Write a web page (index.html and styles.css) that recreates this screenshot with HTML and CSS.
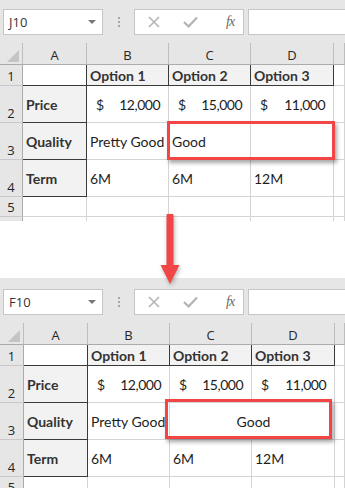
FILE: index.html
```html
<!DOCTYPE html>
<html lang="en">
<head>
  <meta charset="UTF-8" />
  <title>Merge Cells</title>
  <link rel="stylesheet" href="styles.css">
</head>
<body>
<div class="shot">

  <!-- Before -->
  <div class="panel first">
    <div class="fbar">
      <div class="namebox"><span>J10</span><i class="caret"></i></div>
      <div class="grip"><i></i><i></i><i></i></div>
      <div class="fbtns">
        <svg width="12" height="12" viewBox="0 0 12 12"><path d="M1 1L11 11M11 1L1 11" stroke="#b4b4b4" stroke-width="1.6" fill="none"/></svg>
        <svg width="15" height="12" viewBox="0 0 15 12"><path d="M1 6L5.5 10.5L14 1.5" stroke="#b4b4b4" stroke-width="2.2" fill="none"/></svg>
        <span class="fx">fx</span>
      </div>
      <div class="finput"></div>
    </div>
    <div class="sheet">
      <div class="h corner"><i class="tri"></i></div>
      <div class="h">A</div><div class="h">B</div><div class="h">C</div><div class="h">D</div><div class="h"></div>

      <div class="rh">1</div>
      <div class="c dk"></div>
      <div class="c dk hd">Option 1</div>
      <div class="c dk hd">Option 2</div>
      <div class="c dk hd">Option 3</div>
      <div class="c"></div>

      <div class="rh">2</div>
      <div class="c dk hd">Price</div>
      <div class="c num"><span>$</span><span>12,000</span></div>
      <div class="c num"><span>$</span><span>15,000</span></div>
      <div class="c num"><span>$</span><span>11,000</span></div>
      <div class="c"></div>

      <div class="rh">3</div>
      <div class="c dk hd">Quality</div>
      <div class="c">Pretty Good</div>
      <div class="c">Good</div>
      <div class="c"></div>
      <div class="c"></div>

      <div class="rh">4</div>
      <div class="c dk hd">Term</div>
      <div class="c">6M</div>
      <div class="c">6M</div>
      <div class="c">12M</div>
      <div class="c"></div>

      <div class="rh">5</div>
      <div class="c"></div><div class="c"></div><div class="c"></div><div class="c"></div><div class="c"></div>

      <div class="rh"></div>
      <div class="c"></div><div class="c"></div><div class="c"></div><div class="c"></div><div class="c"></div>

      <div class="mark mark-before"></div>
    </div>
  </div>

  <svg class="arrow" width="30" height="76" viewBox="0 0 30 76">
    <path d="M15 2 L15 52" stroke="#f24646" stroke-width="7" stroke-linecap="round" fill="none"/>
    <path d="M5.5 51 L24.5 51 L15 70 Z" fill="#f24646"/>
  </svg>

  <!-- After -->
  <div class="panel second">
    <div class="fbar">
      <div class="namebox"><span>F10</span><i class="caret"></i></div>
      <div class="grip"><i></i><i></i><i></i></div>
      <div class="fbtns">
        <svg width="12" height="12" viewBox="0 0 12 12"><path d="M1 1L11 11M11 1L1 11" stroke="#b4b4b4" stroke-width="1.6" fill="none"/></svg>
        <svg width="15" height="12" viewBox="0 0 15 12"><path d="M1 6L5.5 10.5L14 1.5" stroke="#b4b4b4" stroke-width="2.2" fill="none"/></svg>
        <span class="fx">fx</span>
      </div>
      <div class="finput"></div>
    </div>
    <div class="sheet wide">
      <div class="h corner"><i class="tri"></i></div>
      <div class="h">A</div><div class="h">B</div><div class="h">C</div><div class="h">D</div><div class="h"></div>

      <div class="rh">1</div>
      <div class="c dk"></div>
      <div class="c dk hd">Option 1</div>
      <div class="c dk hd">Option 2</div>
      <div class="c dk hd">Option 3</div>
      <div class="c"></div>

      <div class="rh">2</div>
      <div class="c dk hd">Price</div>
      <div class="c num"><span>$</span><span>12,000</span></div>
      <div class="c num"><span>$</span><span>15,000</span></div>
      <div class="c num"><span>$</span><span>11,000</span></div>
      <div class="c"></div>

      <div class="rh">3</div>
      <div class="c dk hd">Quality</div>
      <div class="c">Pretty Good</div>
      <div class="c merged">Good</div>
      <div class="c"></div>

      <div class="rh">4</div>
      <div class="c dk hd">Term</div>
      <div class="c">6M</div>
      <div class="c">6M</div>
      <div class="c">12M</div>
      <div class="c"></div>

      <div class="rh">5</div>
      <div class="c"></div><div class="c"></div><div class="c"></div><div class="c"></div><div class="c"></div>

      <div class="mark mark-after"></div>
    </div>
  </div>

</div>
</body>
</html>
```

FILE: styles.css
```css
html, body {
  margin: 0;
  padding: 0;
  background: #fff;
  overflow: hidden;
}

.shot {
  position: relative;
  width: 345px;
  height: 488px;
  overflow: hidden;
  font-family: 'Lato', 'Open Sans', sans-serif;
  color: #1e1e1e;
}

.panel {
  display: flex;
  flex-direction: column;
}

.first {
  margin-top: -2px;
  height: 280px;
}

/* formula bar */
.fbar {
  height: 45px;
  box-sizing: border-box;
  padding: 11px 0 0 3px;
  background: #e6e6e6;
  display: flex;
  align-items: flex-start;
}

.namebox {
  width: 100px;
  height: 26px;
  box-sizing: border-box;
  background: #fff;
  border: 1px solid #c6c6c6;
  display: flex;
  align-items: center;
  justify-content: space-between;
  padding: 0 6px 0 5px;
  font-family: 'Open Sans', sans-serif;
  font-size: 13px;
  color: #333;
}

.caret {
  width: 0;
  height: 0;
  border-left: 4px solid transparent;
  border-right: 4px solid transparent;
  border-top: 4px solid #777;
}

.grip {
  width: 31px;
  height: 26px;
  display: flex;
  flex-direction: column;
  align-items: center;
  justify-content: center;
  gap: 2px;
}

.grip i {
  width: 2px;
  height: 2px;
  background: #a6a6a6;
}

.fbtns {
  width: 110px;
  height: 26px;
  box-sizing: border-box;
  background: #fff;
  border: 1px solid #c6c6c6;
  display: flex;
  align-items: center;
  padding: 0 0 0 13px;
  gap: 23px;
}

.fx {
  font-family: 'Liberation Serif', serif;
  font-style: italic;
  font-size: 14px;
  color: #6a6a6a;
  letter-spacing: -1px;
  margin-left: 5px;
}

.finput {
  flex: 1;
  height: 26px;
  margin-left: 4px;
  margin-right: -4px;
  box-sizing: border-box;
  background: #fff;
  border: 1px solid #c6c6c6;
}

/* sheet grid */
.sheet {
  position: relative;
  display: grid;
  grid-template-columns: 23px 64px 82px 82px 83px 1fr;
  grid-template-rows: 22px 21px 37px 37px 37px 20px 20px;
  height: 178px;
  overflow: hidden;
  font-size: 14px;
}

.sheet.wide {
  grid-template-columns: 24px 64px 82px 82px 83px 1fr;
  height: auto;
  overflow: visible;
}

.h, .rh {
  background: #e6e6e6;
  font-family: 'Open Sans', sans-serif;
  font-size: 13px;
  color: #262626;
  box-sizing: border-box;
}

.h {
  border-right: 1px solid #bdbdbd;
  border-bottom: 1px solid #ababab;
  display: flex;
  align-items: center;
  justify-content: center;
  padding-top: 2px;
}

.corner {
  position: relative;
}

.tri {
  position: absolute;
  right: 3px;
  bottom: 2px;
  width: 0;
  height: 0;
  border-left: 12px solid transparent;
  border-bottom: 12px solid #c4c4c4;
}

.rh {
  border-right: 1px solid #ababab;
  border-bottom: 1px solid #c8c8c8;
  display: flex;
  align-items: flex-end;
  justify-content: center;
  line-height: 18px;
}

.c {
  box-sizing: border-box;
  border-right: 1px solid #d4d4d4;
  border-bottom: 1px solid #d4d4d4;
  display: flex;
  align-items: center;
  padding: 0 0 0 3px;
  white-space: nowrap;
}

.c.dk {
  border-right-color: #3a3a3a;
  border-bottom-color: #3a3a3a;
}

.c.hd {
  background: #f2f2f2;
  font-weight: bold;
  color: #333;
}

.c.num {
  justify-content: space-between;
  padding: 0 8px 0 9px;
  letter-spacing: -0.5px;
}

.c.merged {
  grid-column: span 2;
  justify-content: center;
}

/* red highlight boxes */
.mark {
  position: absolute;
  box-sizing: border-box;
  border: 3px solid #f24646;
  box-shadow: 2px 3px 4px rgba(0, 0, 0, 0.35);
}

.mark-before {
  left: 167px;
  top: 78px;
  width: 168px;
  height: 39px;
}

.mark-after {
  left: 165px;
  top: 76px;
  width: 167px;
  height: 40px;
}

.arrow {
  position: absolute;
  left: 155px;
  top: 214px;
  filter: drop-shadow(1px 2px 2px rgba(0, 0, 0, 0.3));
}
```
